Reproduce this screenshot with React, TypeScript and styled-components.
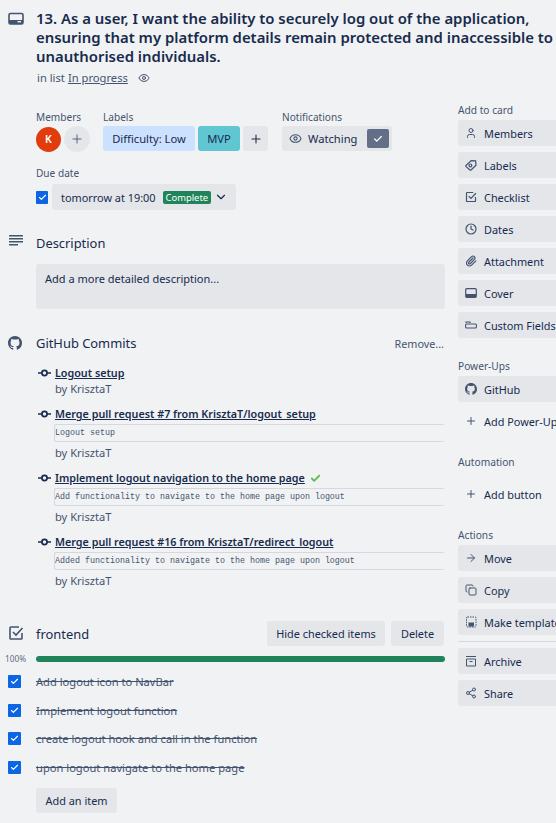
import React from "react";
import styled, { createGlobalStyle } from "styled-components";
import { ArrowRight, Check, ChevronDown, Clock, Copy, Eye, Paperclip, Plus, Share2, User } from "lucide-react";

const GlobalStyle = createGlobalStyle`
  html, body {
    margin: 0;
    padding: 0;
    width: 556px;
    height: 823px;
    overflow: hidden;
    background: #f1f2f4;
    font-family: "Noto Sans", "Open Sans", sans-serif;
    color: #172b4d;
  }
`;

const Viewport = styled.div`
  width: 556px;
  height: 823px;
  overflow: hidden;
`;

const Card = styled.div`
  display: flex;
  width: 640px;
  height: 823px;
`;

const Main = styled.main`
  width: 409px;
  margin-left: 36px;
  flex-shrink: 0;
`;

const Side = styled.aside`
  width: 168px;
  margin-left: 13px;
  padding-top: 103px;
  flex-shrink: 0;
`;

const Section = styled.section<{ $top: number }>`
  position: relative;
  margin-top: ${(p) => p.$top}px;
`;

const GutterIcon = styled.span<{ $top?: number }>`
  position: absolute;
  left: -28px;
  top: ${(p) => p.$top ?? 0}px;
  width: 16px;
  height: 16px;
  display: flex;
  color: #44546f;
`;

const Title = styled.h1`
  margin: 0;
  padding-top: 9px;
  width: 530px;
  font-size: 14.9px;
  line-height: 19px;
  font-weight: 600;
  color: #172b4d;
`;

const ListLine = styled.div`
  display: flex;
  align-items: center;
  margin: 3px 0 0 1px;
  font-size: 11.2px;
  line-height: 17px;
  color: #44546f;
  a {
    margin-left: 3px;
    color: #44546f;
    text-decoration: underline;
  }
  svg {
    margin-left: 10px;
  }
`;

const MetaRow = styled.div`
  display: flex;
  margin-top: 23px;
`;

const MetaGroup = styled.div<{ $width: number; $top?: number }>`
  width: ${(p) => p.$width}px;
  margin-top: ${(p) => p.$top ?? 0}px;
  flex-shrink: 0;
`;

const MetaLabel = styled.div`
  font-size: 10.1px;
  line-height: 16px;
  height: 17px;
  color: #44546f;
`;

const InlineRow = styled.div`
  display: flex;
  align-items: center;
  gap: 3px;
`;

const Avatar = styled.div`
  width: 25px;
  height: 25px;
  border-radius: 50%;
  background: #e13c0c;
  color: #fff;
  font-size: 10.5px;
  font-weight: 600;
  display: flex;
  align-items: center;
  justify-content: center;
`;

const RoundAdd = styled.div`
  width: 26px;
  height: 26px;
  border-radius: 50%;
  background: #e4e6ea;
  color: #44546f;
  display: flex;
  align-items: center;
  justify-content: center;
`;

const Chip = styled.div<{ $bg: string; $width: number }>`
  width: ${(p) => p.$width}px;
  height: 25px;
  border-radius: 3px;
  background: ${(p) => p.$bg};
  font-size: 11.2px;
  display: flex;
  align-items: center;
  justify-content: center;
  color: #172b4d;
  flex-shrink: 0;
`;

const Watch = styled.div`
  width: 110px;
  height: 25px;
  border-radius: 3px;
  background: #e4e6ea;
  display: flex;
  align-items: center;
  padding-left: 7px;
  box-sizing: border-box;
  font-size: 11.2px;
  color: #172b4d;
  svg {
    color: #44546f;
  }
  span {
    margin-left: 6px;
    width: 59px;
  }
`;

const WatchCheck = styled.div`
  width: 22px;
  height: 19px;
  border-radius: 2px;
  background: #626f86;
  color: #fff;
  display: flex;
  align-items: center;
  justify-content: center;
`;

const DueRow = styled.div`
  display: flex;
  align-items: center;
  margin-top: 2px;
`;

const Tick = styled.div`
  width: 12px;
  height: 13px;
  border-radius: 1px;
  background: #0c66e4;
  color: #fff;
  display: flex;
  align-items: center;
  justify-content: center;
  flex-shrink: 0;
`;

const DueButton = styled.div`
  margin-left: 4px;
  width: 184px;
  height: 26px;
  border-radius: 3px;
  background: #e4e6ea;
  box-sizing: border-box;
  padding-left: 9px;
  display: flex;
  align-items: center;
  font-size: 10.9px;
  color: #172b4d;
  white-space: nowrap;
  svg {
    margin-left: 3px;
  }
`;

const Lozenge = styled.span`
  margin-left: 7px;
  padding: 0 3px;
  height: 13px;
  line-height: 13px;
  font-size: 9.4px;
  border-radius: 2px;
  background: #1f845a;
  color: #fff;
`;

const SectionHead = styled.div<{ $height?: number }>`
  display: flex;
  align-items: center;
  justify-content: space-between;
  height: ${(p) => p.$height ?? 20}px;
  font-size: 12.9px;
  color: #172b4d;
`;

const RemoveLink = styled.span`
  font-size: 10.8px;
  color: #44546f;
  margin-right: 1px;
`;

const DescBox = styled.div`
  margin-top: 11px;
  height: 45px;
  border-radius: 3px;
  background: #e4e6ea;
  box-sizing: border-box;
  padding: 6px 9px;
  font-size: 11px;
  line-height: 17px;
  color: #172b4d;
`;

const CommitList = styled.div`
  margin-top: 12px;
  padding-left: 19px;
`;

const Commit = styled.div<{ $gap: number }>`
  position: relative;
  margin-top: ${(p) => p.$gap}px;
`;

const CommitIcon = styled.span`
  position: absolute;
  left: -17px;
  top: 2px;
  display: flex;
  color: #172b4d;
`;

const CommitTitle = styled.a`
  display: block;
  font-size: 10.75px;
  line-height: 16px;
  font-weight: 600;
  text-decoration: underline;
  color: #172b4d;
  svg {
    margin-left: 5px;
    vertical-align: -2px;
    color: #61bd4f;
  }
`;

const CommitBody = styled.pre`
  margin: 2px 0 0 -1px;
  width: 390px;
  height: 18px;
  box-sizing: border-box;
  border: solid #d5d8de;
  border-width: 1px 0 1px 1px;
  border-radius: 2px;
  font-family: "Liberation Mono", monospace;
  font-size: 8.33px;
  line-height: 16px;
  color: #44546f;
  overflow: hidden;
`;

const CommitBy = styled.div<{ $tight?: boolean }>`
  margin-top: ${(p) => (p.$tight ? 0 : 3)}px;
  font-size: 11.1px;
  line-height: 16px;
  color: #44546f;
`;

const HeadButtons = styled.div`
  display: flex;
  gap: 6px;
  margin-right: 1px;
`;

const FlatButton = styled.div<{ $width: number }>`
  width: ${(p) => p.$width}px;
  height: 25px;
  border-radius: 3px;
  background: #e4e6ea;
  font-size: 10.9px;
  display: flex;
  align-items: center;
  justify-content: center;
  color: #172b4d;
`;

const Progress = styled.div`
  position: relative;
  margin-top: 10px;
  height: 6px;
  border-radius: 3px;
  background: #1f845a;
`;

const Percent = styled.span`
  position: absolute;
  left: -31px;
  top: -3px;
  font-size: 8.3px;
  line-height: 12px;
  color: #626f86;
`;

const Items = styled.div`
  margin-top: 5px;
`;

const Item = styled.div`
  position: relative;
  height: 28.7px;
  display: flex;
  align-items: center;
  font-size: 11.15px;
  color: #44546f;
  text-decoration: line-through;
`;

const ItemTick = styled(Tick)`
  position: absolute;
  left: -28px;
  top: 8px;
  width: 13px;
`;

const AddItem = styled(FlatButton)`
  margin-top: 6px;
`;

const SideLabel = styled.div<{ $top?: number }>`
  margin-top: ${(p) => p.$top ?? 0}px;
  height: 14px;
  line-height: 14px;
  font-size: 10.2px;
  color: #44546f;
`;

const SideButton = styled.div<{ $ghost?: boolean; $top?: number }>`
  margin-top: ${(p) => p.$top ?? 6}px;
  height: 26px;
  border-radius: 3px;
  background: ${(p) => (p.$ghost ? "transparent" : "#e4e6ea")};
  box-sizing: border-box;
  padding-left: 7px;
  display: flex;
  align-items: center;
  gap: 7px;
  font-size: 10.9px;
  color: #172b4d;
  white-space: nowrap;
  svg {
    color: #44546f;
    flex-shrink: 0;
  }
`;

const SideRule = styled.hr`
  margin: 6px 0 0;
  border: 0;
  height: 1px;
  background: #d5d8de;
`;

const CardGlyph = () => (
  <svg width="16" height="16" viewBox="0 0 16 16" fill="none">
    <rect x="1" y="2.5" width="14" height="10.5" rx="1.5" stroke="currentColor" strokeWidth="1.6" />
    <path d="M1 9h14v3a1 1 0 0 1-1 1H2a1 1 0 0 1-1-1z" fill="currentColor" />
    <rect x="9.5" y="10" width="3.5" height="1.4" fill="#f1f2f4" />
  </svg>
);

const LinesGlyph = () => (
  <svg width="16" height="14" viewBox="0 0 16 14" fill="currentColor">
    <rect x="1" y="1" width="14" height="1.5" />
    <rect x="1" y="4" width="14" height="1.5" />
    <rect x="1" y="7" width="14" height="1.5" />
    <rect x="1" y="10" width="9" height="1.5" />
  </svg>
);

const GithubGlyph = ({ size = 14 }: { size?: number }) => (
  <svg width={size} height={size} viewBox="0 0 16 16" fill="#44546f">
    <path d="M8 0C3.58 0 0 3.58 0 8c0 3.54 2.29 6.53 5.47 7.59.4.07.55-.17.55-.38 0-.19-.01-.82-.01-1.49-2.01.37-2.53-.49-2.69-.94-.09-.23-.48-.94-.82-1.13-.28-.15-.68-.52-.01-.53.63-.01 1.08.58 1.23.82.72 1.21 1.87.87 2.33.66.07-.52.28-.87.51-1.07-1.78-.2-3.64-.89-3.64-3.95 0-.87.31-1.59.82-2.15-.08-.2-.36-1.02.08-2.12 0 0 .67-.21 2.2.82.64-.18 1.32-.27 2-.27s1.36.09 2 .27c1.53-1.04 2.2-.82 2.2-.82.44 1.1.16 1.92.08 2.12.51.56.82 1.27.82 2.15 0 3.07-1.87 3.75-3.65 3.95.29.25.54.73.54 1.48 0 1.07-.01 1.93-.01 2.2 0 .21.15.46.55.38A8.01 8.01 0 0 0 16 8c0-4.42-3.58-8-8-8z" />
  </svg>
);

const CommitGlyph = () => (
  <svg width="13" height="12" viewBox="0 0 13 12" fill="none" stroke="currentColor" strokeWidth="1.7">
    <circle cx="6.5" cy="6" r="2.6" />
    <path d="M0 6h3.8M9.2 6H13" />
  </svg>
);

const ChecklistGlyph = ({ size = 16 }: { size?: number }) => (
  <svg width={size} height={size} viewBox="0 0 16 16" fill="none" stroke="currentColor" strokeWidth="1.6">
    <path d="M14 8v5.2a.8.8 0 0 1-.8.8H2.8a.8.8 0 0 1-.8-.8V2.8a.8.8 0 0 1 .8-.8H11" />
    <path d="M5 7l3 3 6.5-7" />
  </svg>
);

const LabelGlyph = () => (
  <svg width="12" height="12" viewBox="0 0 12 12" fill="none" stroke="currentColor" strokeWidth="1.2">
    <path d="M1 6.5 6.2 1.6l4.4.3.4 4.3-5 4.8a.7.7 0 0 1-1 0L1 7.6a.7.7 0 0 1 0-1.1z" />
    <circle cx="5.4" cy="6.4" r="1.4" />
  </svg>
);

const CoverGlyph = () => (
  <svg width="12" height="12" viewBox="0 0 12 12" fill="none">
    <rect x="0.7" y="1.7" width="10.6" height="8.6" rx="1" stroke="currentColor" strokeWidth="1.2" />
    <rect x="1" y="7" width="10" height="3.3" fill="currentColor" />
  </svg>
);

const FieldsGlyph = () => (
  <svg width="12" height="12" viewBox="0 0 12 12" fill="none" stroke="currentColor" strokeWidth="1.1">
    <path d="M1 4V3h4v1" />
    <rect x="0.6" y="5" width="10.8" height="4" rx="1" />
  </svg>
);

const TemplateGlyph = () => (
  <svg width="12" height="12" viewBox="0 0 12 12" fill="none" stroke="currentColor">
    <rect x="1.5" y="1" width="9.5" height="10" rx="1" strokeDasharray="1.5 1" />
    <rect x="3.5" y="6.5" width="5.5" height="4" fill="currentColor" stroke="none" />
  </svg>
);

const ArchiveGlyph = () => (
  <svg width="12" height="12" viewBox="0 0 12 12" fill="none" stroke="currentColor" strokeWidth="1">
    <path d="M1 1.5h10M1.5 4h9v7h-9zM4.5 6.5h3" />
  </svg>
);

const commits = [
  { title: "Logout setup", by: "KrisztaT", gap: 0 },
  { title: "Merge pull request #7 from KrisztaT/logout_setup", body: "Logout setup", by: "KrisztaT", gap: 9 },
  {
    title: "Implement logout navigation to the home page",
    body: "Add functionality to navigate to the home page upon logout",
    by: "KrisztaT",
    gap: 9,
    passed: true,
  },
  {
    title: "Merge pull request #16 from KrisztaT/redirect_logout",
    body: "Added functionality to navigate to the home page upon logout",
    by: "KrisztaT",
    gap: 9,
  },
];

const checklist = [
  "Add logout icon to NavBar",
  "Implement logout function",
  "create logout hook and call in the function",
  "upon logout navigate to the home page",
];

const App = () => {
  return (
    <>
      <GlobalStyle />
      <Viewport>
        <Card>
          <Main>
            <Section $top={0}>
              <GutterIcon $top={11}>
                <CardGlyph />
              </GutterIcon>
              <Title>
                13. As a user, I want the ability to securely log out of the application, ensuring that my platform
                details remain protected and inaccessible to unauthorised individuals.
              </Title>
              <ListLine>
                in list <a>In progress</a>
                <Eye size={12} />
              </ListLine>
            </Section>

            <MetaRow>
              <MetaGroup $width={67}>
                <MetaLabel>Members</MetaLabel>
                <InlineRow>
                  <Avatar>K</Avatar>
                  <RoundAdd>
                    <Plus size={14} strokeWidth={1.5} />
                  </RoundAdd>
                </InlineRow>
              </MetaGroup>
              <MetaGroup $width={179}>
                <MetaLabel>Labels</MetaLabel>
                <InlineRow>
                  <Chip $bg="#cce0ff" $width={92}>
                    Difficulty: Low
                  </Chip>
                  <Chip $bg="#60c6d2" $width={42}>
                    MVP
                  </Chip>
                  <Chip $bg="#e4e6ea" $width={25}>
                    <Plus size={14} strokeWidth={1.8} />
                  </Chip>
                </InlineRow>
              </MetaGroup>
              <MetaGroup $width={110}>
                <MetaLabel>Notifications</MetaLabel>
                <Watch>
                  <Eye size={13} />
                  <span>Watching</span>
                  <WatchCheck>
                    <Check size={10} strokeWidth={3} color="#fff" />
                  </WatchCheck>
                </Watch>
              </MetaGroup>
            </MetaRow>

            <MetaGroup $width={240} $top={13}>
              <MetaLabel>Due date</MetaLabel>
              <DueRow>
                <Tick>
                  <Check size={9} strokeWidth={3} />
                </Tick>
                <DueButton>
                  tomorrow at 19:00
                  <Lozenge>Complete</Lozenge>
                  <ChevronDown size={14} />
                </DueButton>
              </DueRow>
            </MetaGroup>

            <Section $top={23}>
              <GutterIcon $top={1}>
                <LinesGlyph />
              </GutterIcon>
              <SectionHead>Description</SectionHead>
              <DescBox>Add a more detailed description...</DescBox>
            </Section>

            <Section $top={24}>
              <GutterIcon $top={3}>
                <GithubGlyph />
              </GutterIcon>
              <SectionHead>
                GitHub Commits
                <RemoveLink>Remove...</RemoveLink>
              </SectionHead>
              <CommitList>
                {commits.map((c) => (
                  <Commit key={c.title} $gap={c.gap}>
                    <CommitIcon>
                      <CommitGlyph />
                    </CommitIcon>
                    <CommitTitle>
                      {c.title}
                      {c.passed && <Check size={11} strokeWidth={4} />}
                    </CommitTitle>
                    {c.body && <CommitBody>{c.body}</CommitBody>}
                    <CommitBy $tight={!c.body}>by {c.by}</CommitBy>
                  </Commit>
                ))}
              </CommitList>
            </Section>

            <Section $top={32}>
              <GutterIcon $top={4}>
                <ChecklistGlyph />
              </GutterIcon>
              <SectionHead $height={25}>
                frontend
                <HeadButtons>
                  <FlatButton $width={118}>Hide checked items</FlatButton>
                  <FlatButton $width={53}>Delete</FlatButton>
                </HeadButtons>
              </SectionHead>
              <Progress>
                <Percent>100%</Percent>
              </Progress>
              <Items>
                {checklist.map((text) => (
                  <Item key={text}>
                    <ItemTick>
                      <Check size={9} strokeWidth={3} />
                    </ItemTick>
                    {text}
                  </Item>
                ))}
              </Items>
              <AddItem $width={81}>Add an item</AddItem>
            </Section>
          </Main>

          <Side>
            <SideLabel>Add to card</SideLabel>
            <SideButton $top={3}>
              <User size={12} /> Members
            </SideButton>
            <SideButton>
              <LabelGlyph /> Labels
            </SideButton>
            <SideButton>
              <ChecklistGlyph size={12} /> Checklist
            </SideButton>
            <SideButton>
              <Clock size={12} strokeWidth={2.4} /> Dates
            </SideButton>
            <SideButton>
              <Paperclip size={12} strokeWidth={2.4} /> Attachment
            </SideButton>
            <SideButton>
              <CoverGlyph /> Cover
            </SideButton>
            <SideButton>
              <FieldsGlyph /> Custom Fields
            </SideButton>

            <SideLabel $top={21}>Power-Ups</SideLabel>
            <SideButton $top={3}>
              <GithubGlyph size={12} /> GitHub
            </SideButton>
            <SideButton $ghost>
              <Plus size={12} /> Add Power-Ups
            </SideButton>

            <SideLabel $top={21}>Automation</SideLabel>
            <SideButton $ghost $top={12}>
              <Plus size={12} /> Add button
            </SideButton>

            <SideLabel $top={21}>Actions</SideLabel>
            <SideButton $top={3}>
              <ArrowRight size={12} /> Move
            </SideButton>
            <SideButton>
              <Copy size={12} /> Copy
            </SideButton>
            <SideButton>
              <TemplateGlyph /> Make template
            </SideButton>
            <SideRule />
            <SideButton>
              <ArchiveGlyph /> Archive
            </SideButton>
            <SideButton>
              <Share2 size={12} /> Share
            </SideButton>
          </Side>
        </Card>
      </Viewport>
    </>
  );
};

export default App;
